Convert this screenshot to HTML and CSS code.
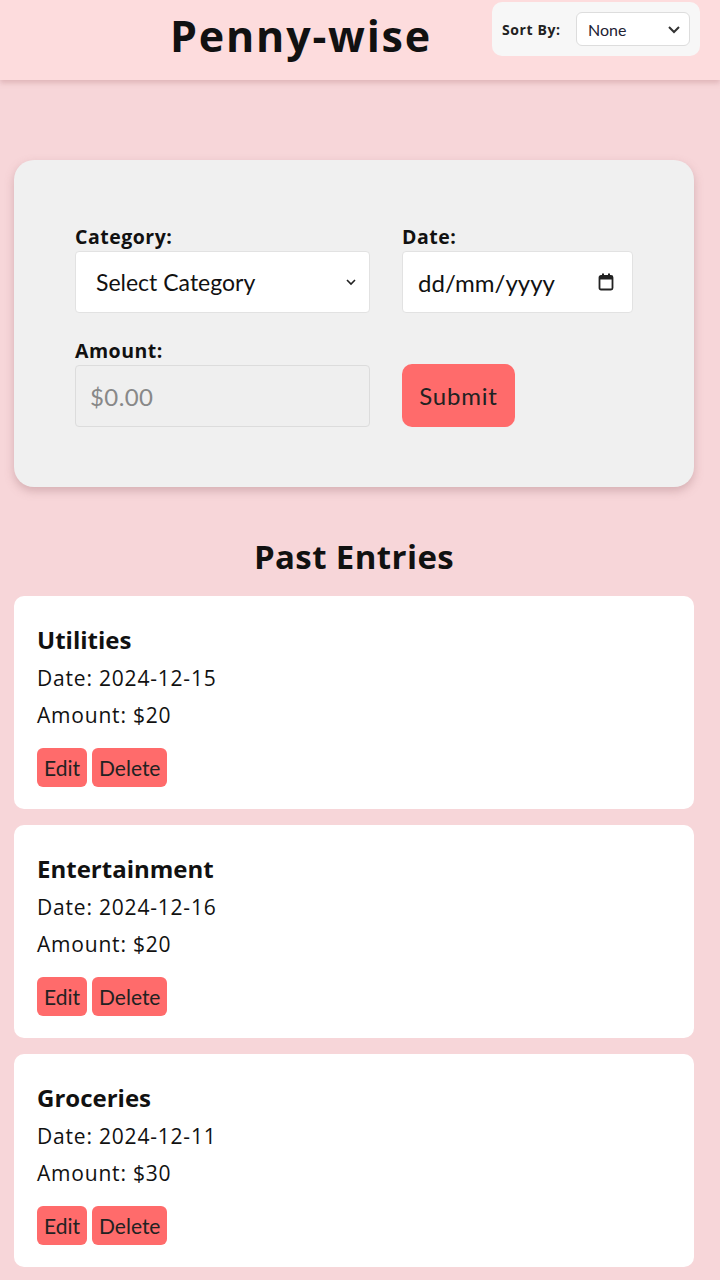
FILE: index.html
```html
<!DOCTYPE html>
<html lang="en">
<head>
<meta charset="utf-8">
<title>Penny-wise</title>
<link rel="stylesheet" href="styles.css">
</head>
<body>
<header class="topbar">
  <h1 class="brand">Penny-wise</h1>
  <div class="sortbox">
    <span class="sort-label">Sort By:</span>
    <div class="sort-select">
      <span>None</span>
      <svg width="14" height="9" viewBox="0 0 14 9"><path d="M2 2 L7 7 L12 2" fill="none" stroke="#333" stroke-width="2"/></svg>
    </div>
  </div>
</header>
<main class="content">
  <section class="form-card">
    <div class="form-grid">
      <div class="field">
        <label class="field-label">Category:</label>
        <div class="control control-select">
          <span>Select Category</span>
          <svg width="12" height="8" viewBox="0 0 12 8"><path d="M2 2 L6 6 L10 2" fill="none" stroke="#222" stroke-width="1.6"/></svg>
        </div>
      </div>
      <div class="field">
        <label class="field-label">Date:</label>
        <div class="control control-date">
          <span>dd/mm/yyyy</span>
          <svg width="16" height="18" viewBox="0 0 16 18"><rect x="1.5" y="3" width="13" height="13.5" rx="1.5" fill="none" stroke="#222" stroke-width="1.8"/><rect x="1.5" y="3" width="13" height="3.5" fill="#222"/><rect x="4" y="0.5" width="2" height="3" fill="#222"/><rect x="10" y="0.5" width="2" height="3" fill="#222"/></svg>
        </div>
      </div>
      <div class="field">
        <label class="field-label">Amount:</label>
        <div class="control control-amount"><span>$0.00</span></div>
      </div>
      <div class="submit-cell">
        <button class="submit-btn">Submit</button>
      </div>
    </div>
  </section>

  <h2 class="section-title">Past Entries</h2>

  <div class="entries">
    <article class="entry">
      <h3 class="entry-title">Utilities</h3>
      <p class="entry-line">Date: 2024-12-15</p>
      <p class="entry-line">Amount: $20</p>
      <div class="entry-actions"><button class="small-btn">Edit</button><button class="small-btn">Delete</button></div>
    </article>
    <article class="entry">
      <h3 class="entry-title">Entertainment</h3>
      <p class="entry-line">Date: 2024-12-16</p>
      <p class="entry-line">Amount: $20</p>
      <div class="entry-actions"><button class="small-btn">Edit</button><button class="small-btn">Delete</button></div>
    </article>
    <article class="entry">
      <h3 class="entry-title">Groceries</h3>
      <p class="entry-line">Date: 2024-12-11</p>
      <p class="entry-line">Amount: $30</p>
      <div class="entry-actions"><button class="small-btn">Edit</button><button class="small-btn">Delete</button></div>
    </article>
  </div>
</main>
</body>
</html>
```

FILE: styles.css
```css
* { box-sizing: border-box; }
html, body { margin: 0; padding: 0; }
body {
  width: 720px;
  min-height: 1280px;
  background: #f7d6d9;
  font-family: Lato, "Open Sans", sans-serif;
  color: #111;
  overflow: hidden;
}
.topbar {
  height: 80px;
  background: #fddcdd;
  display: flex;
  align-items: flex-start;
  padding-left: 170px;
  box-shadow: 0 3px 5px rgba(180, 120, 125, 0.35);
}
.brand {
  margin: 7px 0 0 0;
  font-family: "Open Sans", Lato, sans-serif;
  font-size: 43px;
  line-height: 58px;
  font-weight: 700;
  letter-spacing: 1.8px;
}
.sortbox {
  margin-left: auto;
  margin-right: 20px;
  margin-top: 2px;
  width: 208px;
  height: 54px;
  background: #f7f7f7;
  border-radius: 10px;
  display: flex;
  align-items: center;
  padding: 0 10px;
}
.sort-label {
  font-family: "Open Sans", Lato, sans-serif;
  font-size: 14px;
  font-weight: 700;
  letter-spacing: 0.6px;
  color: #222;
}
.sort-select {
  margin-left: auto;
  width: 114px;
  height: 34px;
  background: #fff;
  border: 1px solid #ddd;
  border-radius: 6px;
  display: flex;
  align-items: center;
  justify-content: space-between;
  padding: 0 8px 0 11px;
  font-size: 16px;
  color: #223;
}
.content { padding: 80px 26px 0 14px; }
.form-card {
  background: #f0f0f0;
  border-radius: 20px;
  padding: 68px 60px 60px 61px;
  box-shadow: 0 4px 10px rgba(150, 100, 105, 0.35);
}
.form-grid {
  display: grid;
  grid-template-columns: 295px 231px;
  column-gap: 32px;
  row-gap: 29px;
}
.field { display: flex; flex-direction: column; gap: 5px; }
.field-label {
  font-family: "Open Sans", Lato, sans-serif;
  font-size: 19.5px;
  font-weight: 700;
  line-height: 18px;
  letter-spacing: 0.5px;
  color: #111;
}
.control {
  height: 62px;
  background: #fff;
  border: 1px solid #e2e2e2;
  border-radius: 4px;
  display: flex;
  align-items: center;
  font-size: 23px;
  color: #111;
}
.control-select { justify-content: space-between; padding: 0 12px 0 20px; }
.control-date { justify-content: space-between; padding: 0 18px 0 15px; font-size: 24px; }
.control-amount {
  background: #efefef;
  border: 1px solid #dcdcdc;
  padding: 0 14px;
  color: #888;
  font-size: 24px;
  letter-spacing: 0.4px;
}
.submit-cell { display: flex; align-items: flex-end; }
.submit-btn {
  width: 113px;
  height: 63px;
  background: #ff6b6b;
  border: none;
  border-radius: 10px;
  font-family: Lato, "Open Sans", sans-serif;
  font-size: 24px;
  letter-spacing: 0.8px;
  color: #222;
  padding: 0;
}
.section-title {
  margin: 50px 0 19px 0;
  text-align: center;
  font-family: "Open Sans", Lato, sans-serif;
  font-size: 33px;
  line-height: 40px;
  font-weight: 700;
  letter-spacing: 0.4px;
}
.entries { display: flex; flex-direction: column; gap: 16px; }
.entry {
  background: #fff;
  border-radius: 10px;
  padding: 30px 23px 22px 23px;
  height: 213px;
}
.entry-title {
  margin: 0;
  font-family: "Open Sans", Lato, sans-serif;
  font-size: 24px;
  line-height: 28px;
  font-weight: 700;
}
.entry-line {
  margin: 0;
  font-family: "Open Sans", Lato, sans-serif;
  font-size: 21px;
  font-weight: 500;
  line-height: 37px;
  letter-spacing: 0.8px;
}
.entry-title + .entry-line { margin-top: 6px; }
.entry-actions { display: flex; gap: 5px; margin-top: 14px; }
.small-btn {
  height: 39px;
  background: #ff6b6b;
  border: none;
  border-radius: 6px;
  padding: 0 7px;
  font-family: Lato, "Open Sans", sans-serif;
  font-size: 21px;
  color: #222;
}
```
